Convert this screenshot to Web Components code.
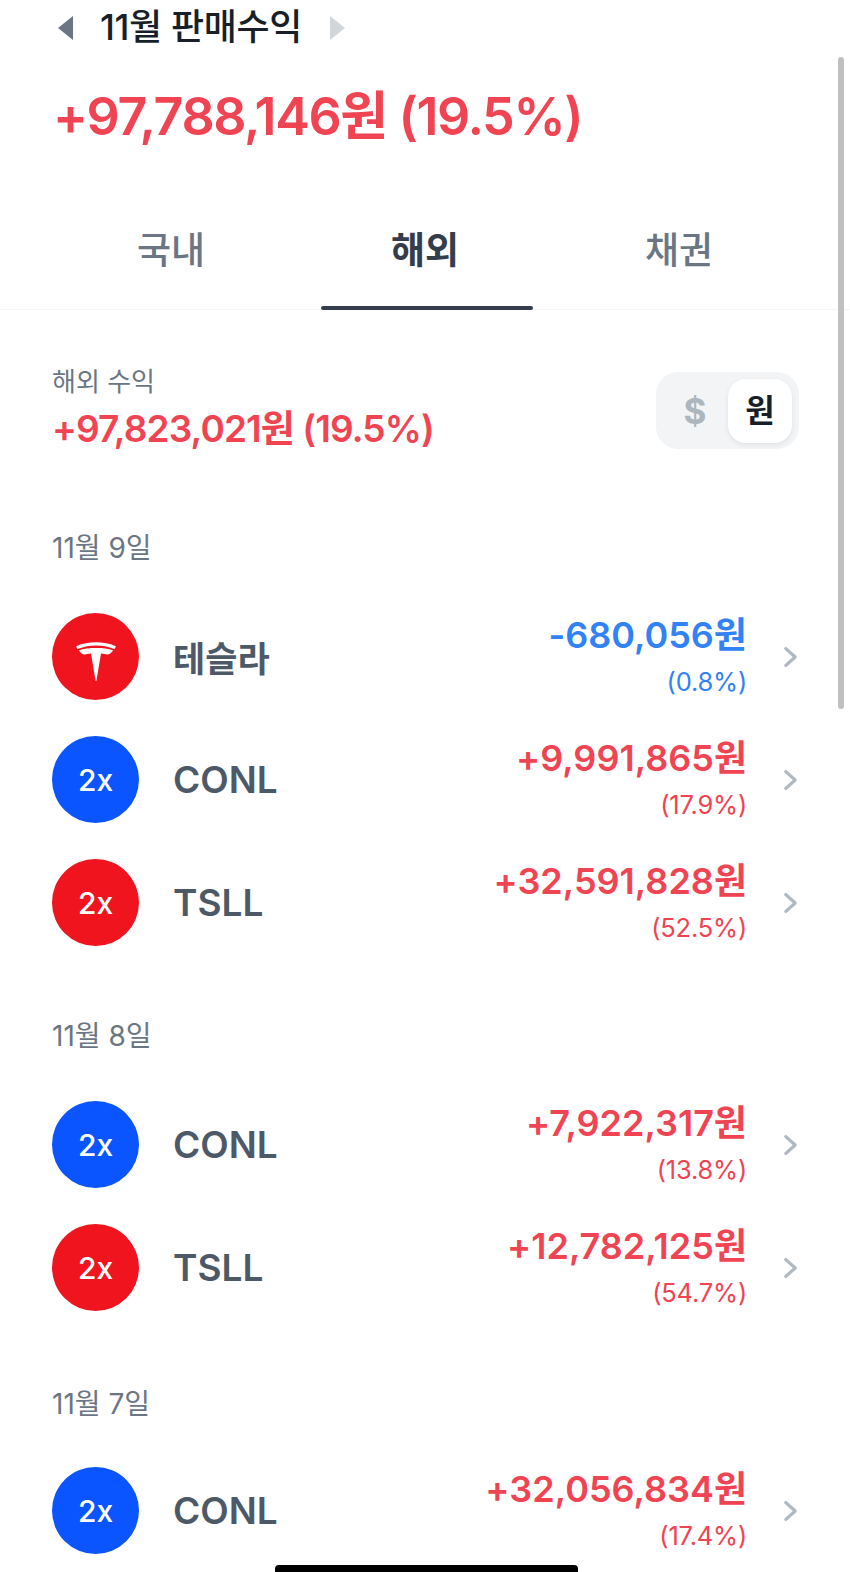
<!DOCTYPE html>
<html lang="ko">
<head>
<meta charset="utf-8">
<title>11월 판매수익</title>
<style>
  html, body { margin: 0; height: 1572px; overflow: hidden; background: #fff; }
  body { font-family: Inter, "Noto Sans CJK KR", sans-serif; }
</style>
</head>
<body>
<profit-page>
  <profit-header title-text="11월 판매수익" amount="+97,788,146원 (19.5%)"></profit-header>
  <market-tabs tabs="국내,해외,채권" active="1"></market-tabs>
  <profit-summary label="해외 수익" amount="+97,823,021원 (19.5%)"></profit-summary>

  <day-group date="11월 9일" style="--top:76px;--gap:29px">
    <stock-row logo="tesla" name="테슬라" amount="-680,056원" rate="(0.8%)" tone="down" style="--name-size:35px"></stock-row>
    <stock-row logo="blue" name="CONL" amount="+9,991,865원" rate="(17.9%)"></stock-row>
    <stock-row logo="red" name="TSLL" amount="+32,591,828원" rate="(52.5%)"></stock-row>
  </day-group>
  <day-group date="11월 8일" style="--top:54px;--gap:29px">
    <stock-row logo="blue" name="CONL" amount="+7,922,317원" rate="(13.8%)"></stock-row>
    <stock-row logo="red" name="TSLL" amount="+12,782,125원" rate="(54.7%)"></stock-row>
  </day-group>
  <day-group date="11월 7일" style="--top:57px;--gap:27px">
    <stock-row logo="blue" name="CONL" amount="+32,056,834원" rate="(17.4%)"></stock-row>
  </day-group>
</profit-page>

<script>
const RED = '#f04452';
const BLUE = '#3182f6';

class ProfitPage extends HTMLElement {
  constructor() {
    super();
    this.attachShadow({ mode: 'open' });
    this.shadowRoot.innerHTML = `
    <style>
      :host {
        display: block;
        position: relative;
        width: 850px;
        height: 1572px;
        overflow: hidden;
        background: #fff;
      }
      .scrollbar {
        position: absolute;
        left: 838px;
        top: 57px;
        width: 6px;
        height: 652px;
        border-radius: 3px;
        background: #c0c0c0;
      }
      .home {
        position: absolute;
        left: 275px;
        top: 1565px;
        width: 303px;
        height: 7px;
        border-radius: 4px 4px 0 0;
        background: #000;
      }
    </style>
    <slot></slot>
    <div class="scrollbar"></div>
    <div class="home"></div>
  `;
  }
}

class ProfitHeader extends HTMLElement {
  constructor() {
    super();
    this.attachShadow({ mode: 'open' });
  }

  connectedCallback() {
    this.shadowRoot.innerHTML = `
    <style>
      :host {
        display: block;
        padding: 6px 0 0 55px;
        height: 206px;
        box-sizing: border-box;
      }
      .nav {
        display: flex;
        align-items: center;
        height: 44px;
      }
      svg { display: block; flex: none; }
      .title {
        font-size: 36px;
        line-height: 42px;
        font-weight: 500;
        color: #191f28;
        letter-spacing: -0.4px;
        margin: -2px 27px 0 26px;
        white-space: nowrap;
      }
      .amount {
        margin-top: 34px;
        font-size: 52px;
        line-height: 66px;
        font-weight: 600;
        color: ${RED};
        letter-spacing: -1.4px;
        white-space: nowrap;
        margin-left: -2px;
      }
    </style>
    <div class="nav">
      <svg width="19" height="26" viewBox="0 0 19 26"><path d="M3 13 18 1v24z" fill="#6b7684"/></svg>
      <span class="title">${this.getAttribute('title-text')}</span>
      <svg width="19" height="26" viewBox="0 0 19 26"><path d="M16 13 1 1v24z" fill="#d1d6db"/></svg>
    </div>
    <div class="amount">${this.getAttribute('amount')}</div>
  `;
  }
}

class MarketTabs extends HTMLElement {
  constructor() {
    super();
    this.attachShadow({ mode: 'open' });
  }

  connectedCallback() {
    const active = Number(this.getAttribute('active'));
    const tabs = this.getAttribute('tabs').split(',');
    this.shadowRoot.innerHTML = `
    <style>
      :host {
        display: grid;
        grid-template-columns: repeat(3, 254px);
        justify-content: center;
        height: 104px;
        box-sizing: border-box;
        border-bottom: 1px solid #f2f4f6;
      }
      .tab {
        position: relative;
        text-align: center;
        font-size: 37px;
        line-height: 90px;
        font-weight: 500;
        color: #6b7684;
      }
      .tab.on { color: #333d4b; font-weight: 700; }
      .tab.on::after {
        content: "";
        position: absolute;
        left: 23px;
        right: 19px;
        bottom: -1px;
        height: 4px;
        border-radius: 2px;
        background: #333d4b;
      }
    </style>
    ${tabs.map((t, i) => `<div class="tab ${i === active ? 'on' : ''}">${t}</div>`).join('')}
  `;
  }
}

class ProfitSummary extends HTMLElement {
  constructor() {
    super();
    this.attachShadow({ mode: 'open' });
  }

  connectedCallback() {
    this.shadowRoot.innerHTML = `
    <style>
      :host {
        display: flex;
        justify-content: space-between;
        align-items: flex-start;
        padding: 60px 51px 0 52px;
      }
      .label {
        font-size: 26px;
        line-height: 24px;
        color: #6b7684;
      }
      .amount {
        margin-top: 10px;
        font-size: 37px;
        line-height: 50px;
        font-weight: 600;
        color: ${RED};
        letter-spacing: -0.9px;
        white-space: nowrap;
      }
      .toggle {
        display: flex;
        align-items: center;
        margin-top: 2px;
        width: 143px;
        height: 77px;
        box-sizing: border-box;
        padding: 6px 7px 6px 0;
        border-radius: 22px;
        background: #f2f4f6;
      }
      .toggle span {
        flex: 1;
        padding-left: 6px;
        text-align: center;
        font-size: 35px;
        font-weight: 700;
        color: #adb5bd;
      }
      .toggle .on {
        flex: none;
        width: 64px;
        height: 64px;
        padding: 0;
        line-height: 64px;
        border-radius: 18px;
        background: #fff;
        color: #191f28;
        font-size: 32px;
        box-shadow: 0 2px 5px rgba(0, 0, 0, 0.08);
      }
    </style>
    <div>
      <div class="label">${this.getAttribute('label')}</div>
      <div class="amount">${this.getAttribute('amount')}</div>
    </div>
    <div class="toggle"><span>$</span><span class="on">원</span></div>
  `;
  }
}

class DayGroup extends HTMLElement {
  constructor() {
    super();
    this.attachShadow({ mode: 'open' });
  }

  connectedCallback() {
    this.shadowRoot.innerHTML = `
    <style>
      :host {
        display: block;
        padding: var(--top, 56px) 0 0 0;
      }
      .date {
        margin-left: 52px;
        margin-bottom: var(--gap, 28px);
        font-size: 28px;
        line-height: 36px;
        color: #6b7684;
      }
    </style>
    <div class="date">${this.getAttribute('date')}</div>
    <slot></slot>
  `;
  }
}

class StockLogo extends HTMLElement {
  constructor() {
    super();
    this.attachShadow({ mode: 'open' });
  }

  connectedCallback() {
    const kind = this.getAttribute('kind');
    const inner = kind === 'tesla'
      ? `<svg width="40" height="39" viewBox="0 0 40 39"><path fill="#fff" d="M0 4.200C7 1.400 13 .3 20 .3s13 1.100 20 3.900l-1.500 2.800C32 4.700 26 3.600 20 3.600S8 4.700 1.500 7zM3 8.200C8 6.600 13 6 20 6s12 .6 17 2.200c-1 2.200-2.800 3.700-5.200 4.200-2.200 0-4.400-.5-6.800-.9L20.400 39h-.8L15 11.500c-2.400.4-4.600.9-6.800.9C5.800 11.900 4 10.400 3 8.200z"/></svg>`
      : '<span>2x</span>';
    this.shadowRoot.innerHTML = `
    <style>
      :host {
        display: flex;
        align-items: center;
        justify-content: center;
        flex: none;
        width: 87px;
        height: 87px;
        border-radius: 50%;
        background: ${kind === 'blue' ? '#0a55ff' : '#f0141f'};
        color: #fff;
        font-size: 30px;
        font-weight: 500;
      }
      svg { display: block; margin-top: 9px; }
    </style>
    ${inner}
  `;
  }
}

class StockRow extends HTMLElement {
  constructor() {
    super();
    this.attachShadow({ mode: 'open' });
  }

  connectedCallback() {
    const color = this.getAttribute('tone') === 'down' ? BLUE : RED;
    this.shadowRoot.innerHTML = `
    <style>
      :host {
        display: flex;
        align-items: center;
        height: 123px;
        padding: 0 52px;
      }
      .name {
        flex: 1;
        margin-left: 34px;
        font-size: var(--name-size, 37px);
        font-weight: 600;
        color: #4e5968;
      }
      .nums {
        text-align: right;
        margin-right: 35px;
        white-space: nowrap;
      }
      .amount {
        font-size: 36px;
        line-height: 50px;
        font-weight: 600;
        color: ${color};
      }
      .rate {
        font-size: 25.500px;
        line-height: 44px;
        letter-spacing: -0.2px;
        color: ${color};
      }
      svg { display: block; flex: none; margin-left: 1px; }
    </style>
    <stock-logo kind="${this.getAttribute('logo')}"></stock-logo>
    <div class="name">${this.getAttribute('name')}</div>
    <div class="nums">
      <div class="amount">${this.getAttribute('amount')}</div>
      <div class="rate">${this.getAttribute('rate')}</div>
    </div>
    <svg width="15" height="24" viewBox="0 0 16 24"><path d="M3 3l10 9-10 9" fill="none" stroke="#b0b8c1" stroke-width="3.400" stroke-linecap="round" stroke-linejoin="round"/></svg>
  `;
  }
}

customElements.define('profit-page', ProfitPage);
customElements.define('profit-header', ProfitHeader);
customElements.define('market-tabs', MarketTabs);
customElements.define('profit-summary', ProfitSummary);
customElements.define('day-group', DayGroup);
customElements.define('stock-logo', StockLogo);
customElements.define('stock-row', StockRow);
</script>
</body>
</html>
